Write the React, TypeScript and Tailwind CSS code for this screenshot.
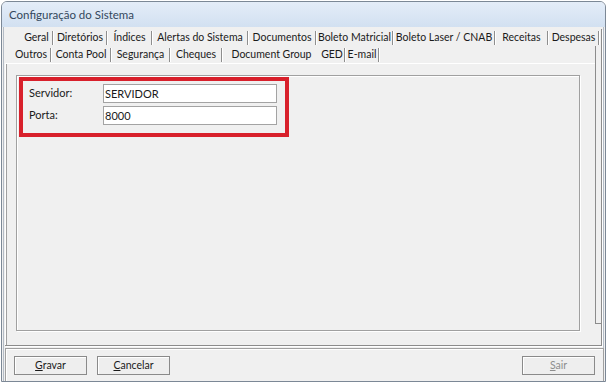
import React from 'react';

const row1 = [
  { label: 'Geral', w: 33 },
  { label: 'Diretórios', w: 54 },
  { label: 'Índices', w: 45 },
  { label: 'Alertas do Sistema', w: 96 },
  { label: 'Documentos', w: 68 },
  { label: 'Boleto Matricial', w: 77 },
  { label: 'Boleto Laser / CNAB', w: 102 },
  { label: 'Receitas', w: 53 },
  { label: 'Despesas', w: 51 },
];

const row2 = [
  { label: 'Outros', w: 40, sep: true },
  { label: 'Conta Pool', w: 60, sep: true },
  { label: 'Segurança', w: 59, sep: true },
  { label: 'Cheques', w: 52, sep: true },
  { label: 'Document Group', w: 97, sep: false },
  { label: 'GED', w: 26, sep: true },
  { label: 'E-mail', w: 34, sep: true },
];

const Tab = ({ label, w, sep = true }: { label: string; w: number; sep?: boolean }) => (
  <div className="flex h-full items-center" style={{ width: w }}>
    <span className="flex-1 text-center whitespace-nowrap">{label}</span>
    {sep ? (
      <span className="flex h-[14px] self-center">
        <span className="w-px h-full bg-[#8e8e8e]" />
        <span className="w-px h-full bg-white" />
      </span>
    ) : null}
  </div>
);

const Button = ({ hot, rest, disabled = false }: { hot: string; rest: string; disabled?: boolean }) => (
  <button
    type="button"
    className={`w-[73px] h-[19px] border border-[#8a8a8a] bg-[#eeeeee] shadow-[inset_1px_1px_0_#ffffff] text-[10.5px] leading-none ${disabled ? 'text-[#8d8d8d]' : 'text-[#1a1a1a]'}`}
  >
    <span className="underline underline-offset-1">{hot}</span>
    {rest}
  </button>
);

export default function App() {
  return (
    <div className="w-[608px] h-[383px] bg-white overflow-hidden font-['Lato','Noto_Sans',sans-serif] text-[10.5px] text-[#1a1a1a]">
      <div className="ml-[1px] mt-[1px] w-[605px] h-[381px] flex flex-col rounded-t-[6px] border border-[#7c8896] bg-[#f0f0f0] overflow-hidden">
        {/* title bar */}
        <div className="h-[25px] shrink-0 flex items-center pl-[7px] bg-gradient-to-b from-[#e4edf8] to-[#d2e0f1] text-[11.5px] text-[#33475c]">
          Configuração do Sistema
        </div>

        <div className="flex-1 flex flex-col mx-[1px] mb-[1px] border-l border-r border-b border-[#b4bcc6] bg-[#f0f0f0]">
          {/* tab control */}
          <div className="ml-[1px] mt-[2px] w-[597px] h-[317px] flex flex-col border-r border-b border-[#8c8c8c] shadow-[1px_1px_0_#ffffff]">
            <div className="h-[17px] shrink-0 flex pl-[16px]">
              {row1.map((t) => (
                <Tab key={t.label} label={t.label} w={t.w} />
              ))}
            </div>
            <div className="flex-1 flex">
              <div className="flex-1 flex flex-col">
                <div className="h-[17px] shrink-0 flex pl-[7px]">
                  {row2.map((t) => (
                    <Tab key={t.label} label={t.label} w={t.w} sep={t.sep} />
                  ))}
                </div>
                <div className="flex-1 border-l border-t border-[#ffffff] shadow-[inset_1px_0_0_#a0a0a0] pl-[10px] pt-[11px] pr-[15px] pb-[14px]">
                  <div className="h-full border border-[#a0a0a0] shadow-[inset_1px_1px_0_#ffffff,1px_1px_0_#ffffff] pl-[2px] pt-[1px]">
                    <div className="w-[270px] h-[60px] border-4 border-[#d8202b] flex flex-col gap-[3px] pt-[3px] pl-[6px] text-[11px]">
                      <div className="flex items-center h-[19px]">
                        <span className="w-[74px]">Servidor:</span>
                        <div className="w-[174px] h-[19px] border border-[#a3a3a3] bg-white flex items-center pl-[1px] leading-none">SERVIDOR</div>
                      </div>
                      <div className="flex items-center h-[19px]">
                        <span className="w-[74px]">Porta:</span>
                        <div className="w-[174px] h-[19px] border border-[#a3a3a3] bg-white flex items-center pl-[1px] leading-none">8000</div>
                      </div>
                    </div>
                  </div>
                </div>
              </div>
              <div className="w-[6px] flex flex-col">
                <div className="h-[278px] border-l border-b border-[#8c8c8c]" />
              </div>
            </div>
          </div>

          {/* bottom bar */}
          <div className="mt-[2px] ml-[1px] w-[599px] h-[34px] flex items-center justify-between px-[8px] border border-[#a0a0a0] shadow-[inset_1px_1px_0_#ffffff]">
            <div className="flex gap-[10px]">
              <Button hot="G" rest="ravar" />
              <Button hot="C" rest="ancelar" />
            </div>
            <Button hot="S" rest="air" disabled />
          </div>
        </div>
      </div>
    </div>
  );
}
